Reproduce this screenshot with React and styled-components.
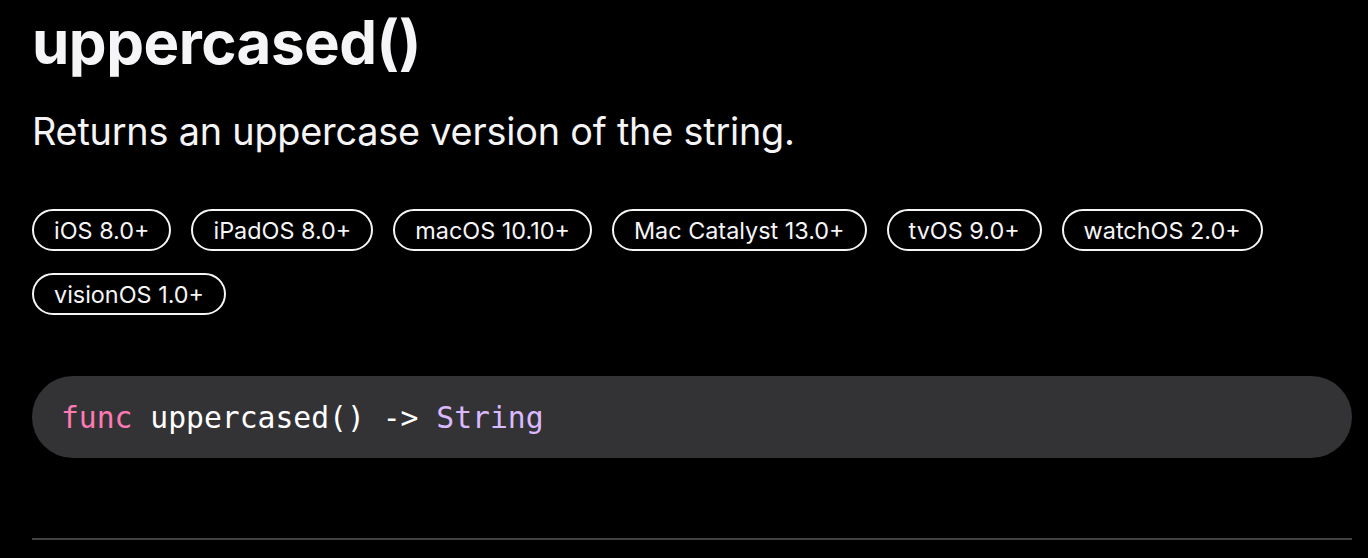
import React from "react";
import styled, { createGlobalStyle } from "styled-components";

const Global = createGlobalStyle`
  html, body { margin: 0; padding: 0; background: #000; }
  body { font-family: Inter, "Noto Sans", sans-serif; color: #f5f5f7; }
`;

const Page = styled.main`
  padding: 0 16px 0 32px;
  display: flex;
  flex-direction: column;
`;

const Title = styled.h1`
  margin: 6px 0 0;
  font-size: 60px;
  line-height: 72px;
  font-weight: 700;
  letter-spacing: -0.5px;
  color: #f5f5f7;
`;

const Abstract = styled.p`
  margin: 31px 0 0;
  font-size: 37.8px;
  line-height: 44px;
  font-weight: 400;
  letter-spacing: -0.2px;
  color: #f5f5f7;
`;

const Availability = styled.ul`
  list-style: none;
  margin: 56px 0 0;
  padding: 0;
  display: flex;
  flex-wrap: wrap;
  column-gap: 20px;
  row-gap: 22px;
`;

const Badge = styled.li`
  height: 42px;
  box-sizing: border-box;
  border: 2px solid #f5f5f7;
  border-radius: 21px;
  padding: 0 20px;
  display: flex;
  align-items: center;
  font-size: 23.4px;
  color: #f5f5f7;
`;

const Declaration = styled.pre`
  margin: 61px 0 0;
  height: 82px;
  box-sizing: border-box;
  background: #333336;
  border-radius: 41px;
  padding: 0 29px;
  display: flex;
  align-items: center;
  font-family: "DejaVu Sans Mono", "Liberation Mono", monospace;
  font-size: 29.7px;
  color: #fff;
`;

const Token = styled.span`
  color: ${(p) => (p.$kind === "keyword" ? "#ff7ab2" : p.$kind === "type" ? "#dabaff" : "#ffffff")};
`;

const Divider = styled.hr`
  margin: 80px 0 0;
  border: none;
  height: 2px;
  background: #424245;
`;

const platforms = [
  "iOS 8.0+",
  "iPadOS 8.0+",
  "macOS 10.10+",
  "Mac Catalyst 13.0+",
  "tvOS 9.0+",
  "watchOS 2.0+",
  "visionOS 1.0+",
];

export default function App() {
  return (
    <>
      <Global />
      <Page>
        <Title>uppercased()</Title>
        <Abstract>Returns an uppercase version of the string.</Abstract>
        <Availability>
          {platforms.map((p) => (
            <Badge key={p}>{p}</Badge>
          ))}
        </Availability>
        <Declaration>
          <Token $kind="keyword">func</Token> uppercased() -&gt; <Token $kind="type">String</Token>
        </Declaration>
        <Divider />
      </Page>
    </>
  );
}
